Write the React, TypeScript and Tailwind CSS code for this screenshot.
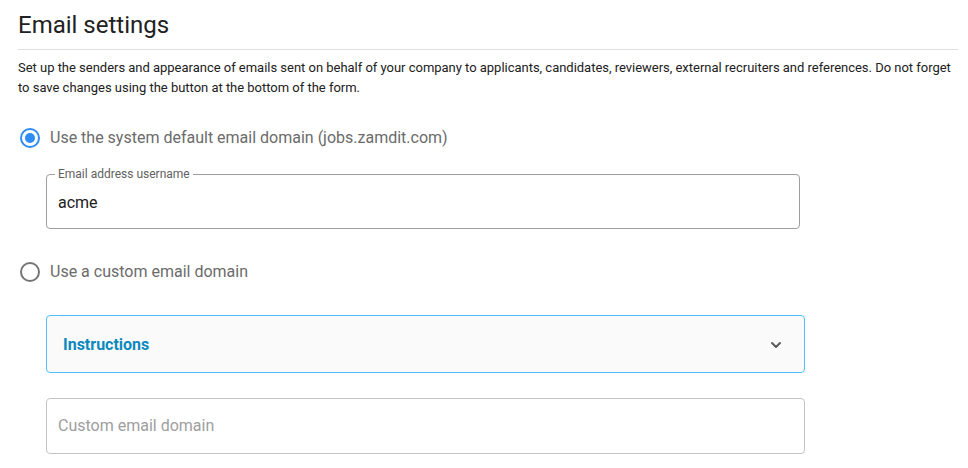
import React from "react";

function Radio({ checked }: { checked: boolean }) {
  return (
    <div className="w-[40px] h-[40px] flex items-center justify-center">
      {checked ? (
        <div className="w-[20px] h-[20px] rounded-full border-[2px] border-[#2f8cf4] flex items-center justify-center">
          <div className="w-[10px] h-[10px] rounded-full bg-[#2f8cf4]" />
        </div>
      ) : (
        <div className="w-[20px] h-[20px] rounded-full border-[2px] border-[#757575]" />
      )}
    </div>
  );
}

export default function App() {
  return (
    <div
      className="bg-white min-h-[468px] pl-[18px] pr-[10px] text-[#212121]"
      style={{ fontFamily: "Roboto, 'Liberation Sans', sans-serif" }}
    >
      <h1 className="pt-[9px] text-[24px] leading-[32px] font-normal text-[#212121]">Email settings</h1>
      <div className="mt-[8px] border-t border-[#e0e0e0]" />
      <p className="mt-[8px] text-[13px] leading-[20px] text-[#212121] tracking-[-0.02px]">
        Set up the senders and appearance of emails sent on behalf of your company to applicants, candidates, reviewers, external recruiters and references. Do not forget to save changes using the button at the bottom of the form.
      </p>

      <div className="mt-[20px] flex items-center h-[40px] -ml-[8px]">
        <Radio checked />
        <span className="text-[16px] text-[#6b6b6b]">Use the system default email domain (jobs.zamdit.com)</span>
      </div>

      <div className="mt-[16px] ml-[28px] relative w-[754px] h-[55px] border border-[#9e9e9e] rounded-[4px] flex items-center px-[11px]">
        <span className="absolute -top-[8px] left-[8px] bg-white px-[3px] text-[12px] leading-[14px] text-[#616161]">Email address username</span>
        <span className="text-[16px] text-[#212121] mt-[2px]">acme</span>
      </div>

      <div className="mt-[23px] flex items-center h-[40px] -ml-[8px]">
        <Radio checked={false} />
        <span className="text-[16px] text-[#6b6b6b]">Use a custom email domain</span>
      </div>

      <div className="mt-[23px] ml-[28px] w-[759px] h-[58px] border border-[#4fc3f7] rounded-[4px] bg-[#fafafa] flex items-center justify-between pl-[16px] pr-[20px]">
        <span className="text-[16px] font-bold text-[#0b89bd] mt-[1px]">Instructions</span>
        <svg width="16" height="16" viewBox="0 0 24 24" fill="none" stroke="#5a5a5a" strokeWidth="3" strokeLinecap="round" strokeLinejoin="round" className="mt-[1px]">
          <path d="M6 9l6 6 6-6" />
        </svg>
      </div>

      <div className="mt-[25px] ml-[28px] w-[759px] h-[56px] border border-[#c4c4c4] rounded-[4px] flex items-center px-[11px]">
        <span className="text-[16px] text-[#9e9e9e]">Custom email domain</span>
      </div>
    </div>
  );
}
